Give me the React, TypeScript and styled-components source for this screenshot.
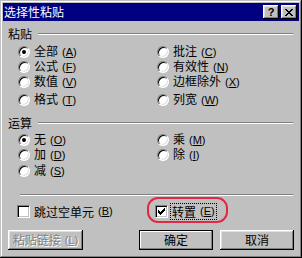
import React from "react";
import styled, { createGlobalStyle } from "styled-components";

const Global = createGlobalStyle`
  html, body { margin: 0; padding: 0; background: #c0c0c0; }
  * { box-sizing: border-box; }
`;

const FONT = `"Noto Sans CJK SC", "Liberation Sans", sans-serif`;

const Window = styled.div`
  width: 302px;
  height: 258px;
  padding: 3px;
  background: #c0c0c0;
  display: flex;
  flex-direction: column;
  font-family: ${FONT};
  font-size: 12px;
  color: #000;
  box-shadow: inset -1px -1px #000, inset 1px 1px #c0c0c0, inset -2px -2px #808080,
    inset 2px 2px #fff;
`;

const TitleBar = styled.div`
  height: 18px;
  background: #000080;
  display: flex;
  align-items: center;
  justify-content: space-between;
  padding: 0 2px 0 1px;
`;

const TitleText = styled.span`
  color: #fff;
  font-size: 12px;
  line-height: 14px;
`;

const TitleButtons = styled.div`
  display: flex;
  gap: 2px;
`;

const CaptionButton = styled.div`
  width: 16px;
  height: 14px;
  background: #c0c0c0;
  display: flex;
  align-items: center;
  justify-content: center;
  font-family: "Liberation Sans", sans-serif;
  font-weight: bold;
  font-size: 11px;
  line-height: 11px;
  box-shadow: inset -1px -1px #000, inset 1px 1px #fff, inset -2px -2px #808080,
    inset 2px 2px #dfdfdf;
`;

const Body = styled.div`
  flex: 1;
  display: flex;
  flex-direction: column;
  padding: 0 5px 0 5px;
`;

const Header = styled.div<{ $top: number }>`
  margin-top: ${(p) => p.$top}px;
  height: 14px;
  display: flex;
  align-items: center;
  gap: 6px;
  line-height: 14px;
`;

const EtchLine = styled.div`
  flex: 1;
  height: 2px;
  margin-right: 1px;
  border-top: 1px solid #808080;
  border-bottom: 1px solid #fff;
`;

const OptionGrid = styled.div<{ $top: number; $rows: string }>`
  margin-top: ${(p) => p.$top}px;
  margin-left: 10px;
  display: grid;
  grid-template-columns: 139px 1fr;
  grid-template-rows: ${(p) => p.$rows};
  grid-auto-flow: column;
  align-items: start;
`;

const Option = styled.label`
  height: 15px;
  display: flex;
  align-items: center;
  gap: 4px;
  white-space: nowrap;
  line-height: 13px;
`;

const RadioCircle = styled.span<{ $checked?: boolean }>`
  width: 12px;
  height: 12px;
  border-radius: 50%;
  background: #fff;
  border: 1px solid;
  border-color: #808080 #fff #fff #808080;
  box-shadow: inset 1px 1px #000, inset -1px -1px #dfdfdf;
  display: flex;
  align-items: center;
  justify-content: center;
  flex-shrink: 0;
  &::after {
    content: "";
    display: ${(p) => (p.$checked ? "block" : "none")};
    width: 4px;
    height: 4px;
    border-radius: 50%;
    background: #000;
  }
`;

const Key = styled.span`
  font-family: "Liberation Sans", sans-serif;
  font-size: 11px;
  margin-left: 4px;
  u {
    text-decoration: underline;
    text-underline-offset: 1px;
  }
`;

const Separator = styled.div`
  margin: 16px 1px 0 12px;
  height: 2px;
  border-top: 1px solid #808080;
  border-bottom: 1px solid #fff;
`;

const CheckRow = styled.div`
  margin-top: 7px;
  height: 16px;
  padding-left: 9px;
  display: grid;
  grid-template-columns: 138px auto;
  align-items: center;
  justify-content: start;
`;

const CheckItem = styled.label`
  position: relative;
  display: flex;
  align-items: center;
  gap: 2px;
  white-space: nowrap;
  line-height: 13px;
`;

const CheckBox = styled.span`
  width: 13px;
  height: 13px;
  background: #fff;
  border: 1px solid;
  border-color: #808080 #fff #fff #808080;
  box-shadow: inset 1px 1px #000, inset -1px -1px #c0c0c0;
  display: flex;
  align-items: center;
  justify-content: center;
  flex-shrink: 0;
`;

const CheckText = styled.span<{ $focus?: boolean }>`
  padding: 0 1px;
  border: 1px ${(p) => (p.$focus ? "dotted #000" : "solid transparent")};
  height: 17px;
  display: flex;
  align-items: center;
`;

const Highlight = styled.span`
  position: absolute;
  left: -8px;
  top: -6px;
  width: 81px;
  height: 26px;
  border: 2px solid #e02a44;
  border-radius: 11px;
  pointer-events: none;
`;

const ButtonRow = styled.div`
  margin-top: 11px;
  display: flex;
  align-items: center;
`;

const Button = styled.div<{
  $width: number;
  $default?: boolean;
  $disabled?: boolean;
  $ml?: string;
}>`
  width: ${(p) => p.$width}px;
  height: 20px;
  margin-left: ${(p) => p.$ml ?? "0"};
  display: flex;
  align-items: center;
  justify-content: center;
  background: #c0c0c0;
  font-size: 12px;
  line-height: 14px;
  color: ${(p) => (p.$disabled ? "#808080" : "#000")};
  text-shadow: ${(p) => (p.$disabled ? "1px 1px #fff" : "none")};
  box-shadow: ${(p) =>
    p.$default
      ? "inset 0 0 0 1px #000, inset -2px -2px #808080, inset 2px 2px #fff"
      : "inset -1px -1px #000, inset 1px 1px #fff, inset -2px -2px #808080, inset 2px 2px #dfdfdf"};
`;

const radiosPaste = [
  { label: "全部", key: "A", checked: true },
  { label: "公式", key: "F" },
  { label: "数值", key: "V" },
  { label: "格式", key: "T" },
  { label: "批注", key: "C" },
  { label: "有效性", key: "N" },
  { label: "边框除外", key: "X" },
  { label: "列宽", key: "W" },
];

const radiosOp = [
  { label: "无", key: "O", checked: true },
  { label: "加", key: "D" },
  { label: "减", key: "S" },
  { label: "乘", key: "M" },
  { label: "除", key: "I" },
];

function Radio({ label, k, checked }: { label: string; k: string; checked?: boolean }) {
  return (
    <Option>
      <RadioCircle $checked={checked} />
      <span>
        {label}
        <Key>
          (<u>{k}</u>)
        </Key>
      </span>
    </Option>
  );
}

function CheckMark() {
  return (
    <svg width="7" height="7" viewBox="0 0 7 7" shapeRendering="crispEdges">
      <path
        d="M0 2h1v3h-1z M1 3h1v3h-1z M2 4h1v3h-1z M3 3h1v3h-1z M4 2h1v3h-1z M5 1h1v3h-1z M6 0h1v3h-1z"
        fill="#000"
      />
    </svg>
  );
}

export default function App() {
  return (
    <>
      <Global />
      <Window>
        <TitleBar>
          <TitleText>选择性粘贴</TitleText>
          <TitleButtons>
            <CaptionButton>?</CaptionButton>
            <CaptionButton>
              <svg width="8" height="7" viewBox="0 0 8 7" shapeRendering="crispEdges">
                <path
                  d="M0 0h2v1h-2z M6 0h2v1h-2z M1 1h2v1h-2z M5 1h2v1h-2z M2 2h4v1h-4z M3 3h2v1h-2z M2 4h4v1h-4z M1 5h2v1h-2z M5 5h2v1h-2z M0 6h2v1h-2z M6 6h2v1h-2z"
                  fill="#000"
                />
              </svg>
            </CaptionButton>
          </TitleButtons>
        </TitleBar>
        <Body>
          <Header $top={6}>
            <span>粘贴</span>
            <EtchLine />
          </Header>
          <OptionGrid $top={3} $rows="15px 15px 18px 15px">
            {radiosPaste.map((r) => (
              <Radio key={r.key} label={r.label} k={r.key} checked={r.checked} />
            ))}
          </OptionGrid>
          <Header $top={9}>
            <span>运算</span>
            <EtchLine />
          </Header>
          <OptionGrid $top={2} $rows="15px 16px 15px">
            {radiosOp.map((r) => (
              <Radio key={r.key} label={r.label} k={r.key} checked={r.checked} />
            ))}
          </OptionGrid>
          <Separator />
          <CheckRow>
            <CheckItem>
              <CheckBox />
              <CheckText>
                跳过空单元
                <Key>
                  (<u>B</u>)
                </Key>
              </CheckText>
            </CheckItem>
            <CheckItem>
              <CheckBox>
                <CheckMark />
              </CheckBox>
              <CheckText $focus>
                转置
                <Key>
                  (<u>E</u>)
                </Key>
              </CheckText>
              <Highlight />
            </CheckItem>
          </CheckRow>
          <ButtonRow>
            <Button $width={75} $disabled>
              粘贴链接
              <Key>
                (<u>L</u>)
              </Key>
            </Button>
            <Button $width={74} $default $ml="auto">
              确定
            </Button>
            <Button $width={74} $ml="7px">
              取消
            </Button>
          </ButtonRow>
        </Body>
      </Window>
    </>
  );
}
